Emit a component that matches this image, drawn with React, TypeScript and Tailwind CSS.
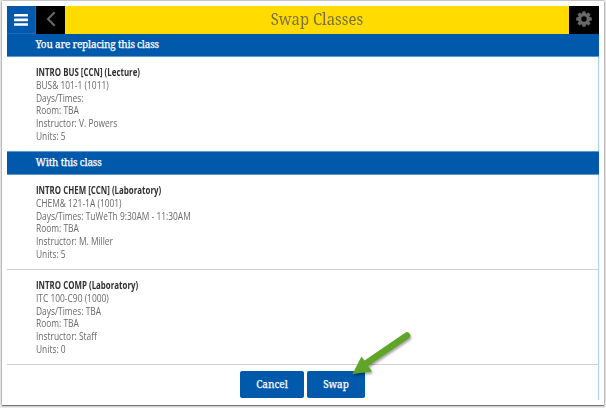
interface ClassInfo {
  title: string;
  code: string;
  days: string;
  room: string;
  instructor: string;
  units: number;
}

const replacing: ClassInfo = {
  title: 'INTRO BUS [CCN] (Lecture)',
  code: 'BUS& 101-1 (1011)',
  days: '',
  room: 'TBA',
  instructor: 'V. Powers',
  units: 5,
};

const replacements: ClassInfo[] = [
  {
    title: 'INTRO CHEM [CCN] (Laboratory)',
    code: 'CHEM& 121-1A (1001)',
    days: 'TuWeTh 9:30AM - 11:30AM',
    room: 'TBA',
    instructor: 'M. Miller',
    units: 5,
  },
  {
    title: 'INTRO COMP (Laboratory)',
    code: 'ITC 100-C90 (1000)',
    days: 'TBA',
    room: 'TBA',
    instructor: 'Staff',
    units: 0,
  },
];

function GearIcon() {
  const teeth = [0, 45, 90, 135, 180, 225, 270, 315];
  return (
    <svg viewBox="-8 -8 16 16" className="h-4 w-4" fill="#686868">
      {teeth.map((angle) => (
        <path key={angle} d="M-2 -5 L-1.4 -7.8 H1.4 L2 -5 Z" transform={`rotate(${angle})`} />
      ))}
      <circle r="4.3" fill="none" stroke="#686868" strokeWidth="3.2" />
    </svg>
  );
}

function Header() {
  return (
    <header className="flex h-7 bg-[#ffdb00]">
      <button aria-label="Menu" className="flex w-[29px] items-center justify-center border-r border-b border-[#1c6cc4] bg-[#0059aa]">
        <svg viewBox="0 0 14 12" className="h-3 w-3.5" fill="#fff">
          <rect width="14" height="2.6" rx="0.4" />
          <rect y="4.6" width="14" height="2.6" rx="0.4" />
          <rect y="9.2" width="14" height="2.6" rx="0.4" />
        </svg>
      </button>
      <button aria-label="Back" className="flex w-[29px] items-center justify-center bg-black pb-[3px]">
        <svg viewBox="0 0 10 16" className="h-4 w-2.5" fill="none" stroke="#686868" strokeWidth="2.1">
          <path d="M8.7 1.2 L2 8 L8.7 14.8" />
        </svg>
      </button>
      <h1 className="flex-1 scale-x-[0.93] text-center font-['Noto_Serif','DejaVu_Serif',serif] text-base leading-[26px] text-[#77703f]">
        Swap Classes
      </h1>
      <button aria-label="Settings" className="flex w-[30px] items-center justify-center bg-black pb-0.5">
        <GearIcon />
      </button>
    </header>
  );
}

function SectionTitle({ children }: { children: string }) {
  return (
    <h2 className="h-[23px] border-b border-[#5a98d0] bg-[#0059aa] pl-[28.5px] font-['Noto_Serif','DejaVu_Serif',serif] text-[10px] leading-[21px] tracking-[-0.2px] text-white [-webkit-text-stroke:0.25px_#fff]">
      {children}
    </h2>
  );
}

function ClassDetails({ info }: { info: ClassInfo }) {
  return (
    <div className="pl-[28.5px] font-['Open_Sans',sans-serif] text-[10px] leading-[12.8px] text-[#686868]">
      <p className="origin-left scale-x-[0.79] font-bold whitespace-nowrap text-[#303030]">{info.title}</p>
      <div className="origin-left scale-x-[0.84]">
        <p>{info.code}</p>
        <p>Days/Times: {info.days}</p>
        <p>Room: {info.room}</p>
        <p>Instructor: {info.instructor}</p>
        <p>Units: {info.units}</p>
      </div>
    </div>
  );
}

export default function App() {
  return (
    <div className="h-[408px] w-[606px] bg-[#ececec] pt-px pl-0.5">
      <main className="h-[404px] w-[602px] bg-white pt-[5px] pl-[5px] shadow-[0_1px_1px_#777,0_0_2px_#777]">
        <div className="h-[394px] w-[592px]">
          <Header />
          <div className="h-[366px] border-r border-[#aad2fa]">
            <div className="-mr-px">
              <SectionTitle>You are replacing this class</SectionTitle>
            </div>
            <section className="h-[94px] pt-[9px]">
              <ClassDetails info={replacing} />
            </section>
            <div className="-mr-px border-t border-[#5a98d0]">
              <SectionTitle>With this class</SectionTitle>
            </div>
            {replacements.map((info) => (
              <section key={info.code} className="h-[95px] border-b border-[#cfcfcf] pt-[9px]">
                <ClassDetails info={info} />
              </section>
            ))}
            <div className="relative flex gap-[3px] pt-1.5 pl-[233px] font-['Noto_Serif','DejaVu_Serif',serif] text-[10px] text-white [-webkit-text-stroke:0.25px_#fff]">
              <button className="h-[27px] w-16 rounded-[2px] bg-[#0059aa]">Cancel</button>
              <button className="h-[27px] w-[58px] rounded-[2px] bg-[#0059aa]">Swap</button>
              {/* callout arrow pointing at the Swap button */}
              <svg
                viewBox="0 0 64 50"
                className="absolute -top-[36px] left-[343px] h-[50px] w-16 drop-shadow-[1px_2px_1px_rgba(0,0,0,0.35)]"
                fill="#60a528"
              >
                <path d="M57 6.5 L16 34.5" stroke="#60a528" strokeWidth="6.5" strokeLinecap="round" />
                <path d="M2.5 45 L11.5 27.5 L22 42.5 Z" />
              </svg>
            </div>
          </div>
        </div>
      </main>
    </div>
  );
}
